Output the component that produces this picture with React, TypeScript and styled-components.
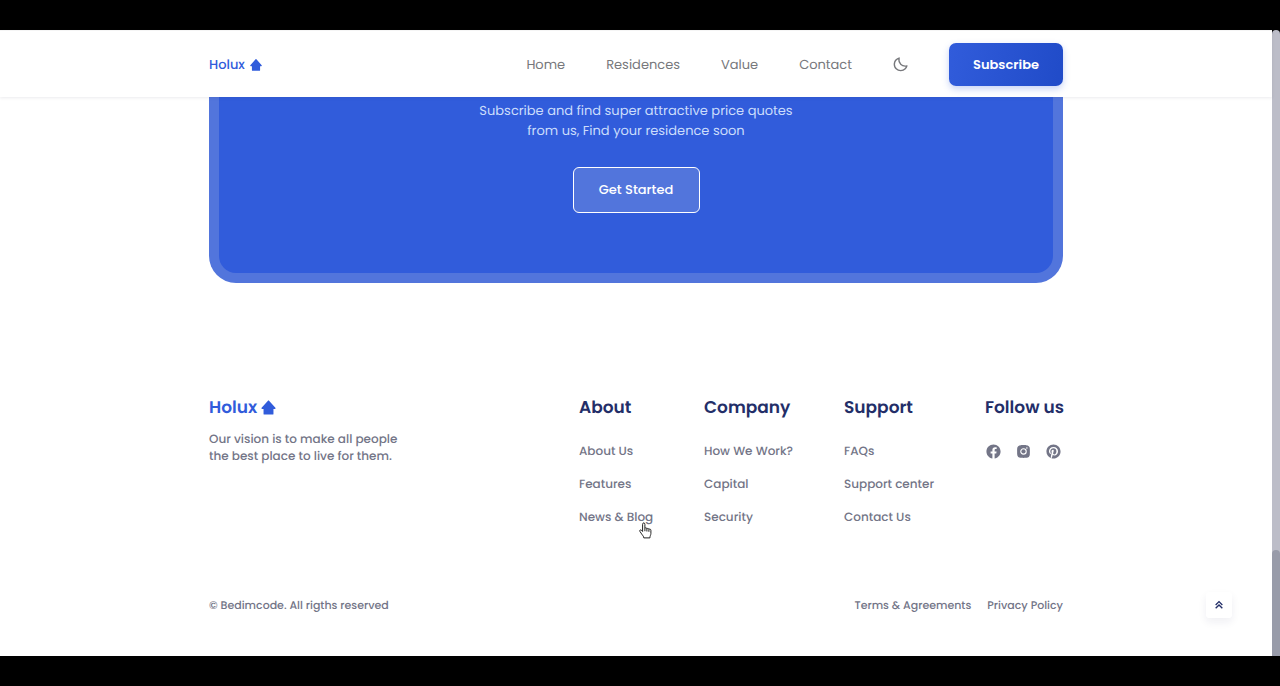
import React from 'react';
import styled, { createGlobalStyle } from 'styled-components';
import {
  BiChevronsUp,
  BiLogoFacebookCircle,
  BiLogoInstagramAlt,
  BiLogoPinterest,
  BiMoon,
  BiSolidHomeAlt2,
} from 'react-icons/bi';

const color = {
  first: '#315cdb',
  firstLight: '#5275dc',
  title: '#232e68',
  text: '#737587',
  nav: '#77787c',
};

const GlobalStyle = createGlobalStyle`
  *, *::before, *::after { box-sizing: border-box; }
  body, h2, p, ul { margin: 0; padding: 0; }
  ul { list-style: none; }
  body {
    background: #000;
    color: ${color.text};
    font-family: Poppins, Inter, "Open Sans", sans-serif;
    font-size: 12px;
    text-rendering: geometricPrecision;
  }
  a { color: inherit; text-decoration: none; }
  button { font: inherit; cursor: pointer; }
`;

const Frame = styled.div`
  display: flex;
  min-height: 100vh;
  padding: 30px 0;
`;

const Page = styled.div`
  position: relative;
  flex: 1;
  display: flex;
  flex-direction: column;
  min-width: 0;
  background: #fff;
`;

const Scrollbar = styled.div`
  display: flex;
  flex-direction: column;
  justify-content: flex-end;
  width: 8px;
  border-radius: 4px 4px 0 0;
  background: #bcbdc8;
`;

const Thumb = styled.div`
  height: 17%;
  border-radius: 4px 4px 0 0;
  background: #989ba9;
`;

const Container = styled.div`
  width: calc(100% - 48px);
  max-width: 854px;
  margin: 0 auto;
`;

const Header = styled.header`
  position: relative;
  background: #fff;
  border-top: 1px solid #f5f5f5;
  box-shadow: 0 1px 3px rgba(60, 60, 90, 0.1);
`;

const Bar = styled(Container)`
  display: flex;
  align-items: center;
  justify-content: space-between;
  height: 66px;
  padding-top: 1px;
`;

const Logo = styled.a<{ $large?: boolean }>`
  display: inline-flex;
  align-items: center;
  gap: ${(p) => (p.$large ? 3 : 4)}px;
  color: ${color.first};
  font-size: ${(p) => (p.$large ? 17 : 13)}px;
  font-weight: ${(p) => (p.$large ? 600 : 500)};
  line-height: ${(p) => (p.$large ? 24 : 20)}px;

  svg {
    width: ${(p) => (p.$large ? 17 : 14)}px;
    height: ${(p) => (p.$large ? 17 : 14)}px;
  }
`;

const Nav = styled.nav`
  display: flex;
  align-items: center;
  gap: 40px;
  color: ${color.nav};
  font-size: 13px;
  line-height: 20px;
`;

const NavList = styled.ul`
  display: flex;
  gap: 41px;
`;

const IconButton = styled.button`
  display: flex;
  padding: 0;
  border: 0;
  background: none;
  color: inherit;

  svg {
    width: 17px;
    height: 17px;
  }
`;

const SubscribeButton = styled.button`
  width: 114px;
  height: 43px;
  border: 0;
  border-radius: 7px;
  background: linear-gradient(101deg, #315cdb, #204bc8);
  box-shadow: 0 3px 7px rgba(49, 92, 219, 0.28);
  color: #fff;
  font-size: 13px;
  font-weight: 600;
`;

const Card = styled.section`
  display: flex;
  flex-direction: column;
  align-items: center;
  padding: 4px 24px 60px;
  border: solid ${color.firstLight};
  border-width: 0 10px 10px;
  border-radius: 0 0 27px 27px;
  background: ${color.first};
  text-align: center;
`;

const CardText = styled.p`
  max-width: 340px;
  color: #cbdcfb;
  font-size: 13px;
  line-height: 20px;
`;

const StartButton = styled.button`
  width: 127px;
  height: 46px;
  margin-top: 26px;
  border: 1px solid #fff;
  border-radius: 6px;
  background: ${color.firstLight};
  color: #fff;
  font-size: 13px;
  font-weight: 500;
`;

const Footer = styled.footer`
  padding: 112px 0 41px;
`;

const FooterTop = styled(Container)`
  display: flex;
  justify-content: space-between;
`;

const Brand = styled.div`
  p {
    margin-top: 12px;
    font-weight: 500;
    line-height: 17px;
    white-space: nowrap;
  }
`;

const Columns = styled.div`
  display: grid;
  grid-template-columns: 72px 87px 88px 78px;
  gap: 53px;
  white-space: nowrap;
`;

const ColumnTitle = styled.h2`
  color: ${color.title};
  font-size: 17px;
  font-weight: 600;
  line-height: 24px;
`;

const LinkList = styled.ul`
  display: grid;
  gap: 13px;
  margin-top: 23px;
  font-weight: 500;
  line-height: 20px;
`;

const FooterLink = styled.a`
  position: relative;
  display: inline-block;
`;

const Socials = styled.ul`
  display: flex;
  gap: 13px;
  margin-top: 24px;

  a { display: flex; }
  svg { width: 17px; height: 17px; }
`;

const Legal = styled(Container)`
  display: flex;
  justify-content: space-between;
  margin-top: 68px;
  font-size: 11px;
  font-weight: 500;
  line-height: 18px;
`;

const LegalLinks = styled.div`
  display: flex;
  gap: 16px;
`;

const ScrollUp = styled.a`
  position: absolute;
  right: 40px;
  bottom: 38px;
  display: flex;
  align-items: center;
  justify-content: center;
  width: 26px;
  height: 26px;
  border-radius: 3px;
  background: #fff;
  box-shadow: 0 4px 9px rgba(30, 35, 80, 0.07);
  color: ${color.title};

  svg { width: 16px; height: 16px; }
`;

const Pointer = styled.svg`
  position: absolute;
  right: 1px;
  top: 14px;
  width: 13px;
  height: 17px;
`;

const HandPointer = () => (
  <Pointer viewBox="0 0 13 17" aria-hidden="true">
    <path
      d="M3.6 9.5V2.3c0-1.9 2.3-1.9 2.3 0v4.1c.3-1 2-.8 2 .5.4-1 2-.6 2 .6.4-.8 2-.5 2 .8v3.2c0 1.5-1 2.4-1 4.4H4.8c0-1.6-1.4-2.6-2.2-4L.9 9.4c-.7-1.2.7-2 1.5-1.2z"
      fill="#fff"
      stroke="#222"
      strokeWidth="1"
      strokeLinejoin="round"
    />
    <path d="M5.9 6.5v2.7M7.9 7v2.5M9.9 7.5v2.3" stroke="#222" fill="none" />
  </Pointer>
);

const navItems = ['Home', 'Residences', 'Value', 'Contact'];

const columns = [
  { title: 'About', links: ['About Us', 'Features', 'News & Blog'] },
  { title: 'Company', links: ['How We Work?', 'Capital', 'Security'] },
  { title: 'Support', links: ['FAQs', 'Support center', 'Contact Us'] },
];

const socials = [
  { name: 'Facebook', Icon: BiLogoFacebookCircle },
  { name: 'Instagram', Icon: BiLogoInstagramAlt },
  { name: 'Pinterest', Icon: BiLogoPinterest },
];

export default function App() {
  return (
    <>
      <GlobalStyle />
      <Frame>
        <Page>
          <Header>
            <Bar>
              <Logo href="#home">
                Holux <BiSolidHomeAlt2 />
              </Logo>
              <Nav>
                <NavList>
                  {navItems.map((item) => (
                    <li key={item}>
                      <a href={`#${item.toLowerCase()}`}>{item}</a>
                    </li>
                  ))}
                </NavList>
                <IconButton aria-label="Toggle dark theme">
                  <BiMoon />
                </IconButton>
                <SubscribeButton>Subscribe</SubscribeButton>
              </Nav>
            </Bar>
          </Header>

          <main>
            <Container>
              <Card>
                <CardText>
                  Subscribe and find super attractive price quotes
                  <br />
                  from us, Find your residence soon
                </CardText>
                <StartButton>Get Started</StartButton>
              </Card>
            </Container>
          </main>

          <Footer>
            <FooterTop>
              <Brand>
                <Logo href="#home" $large>
                  Holux <BiSolidHomeAlt2 />
                </Logo>
                <p>
                  Our vision is to make all people
                  <br />
                  the best place to live for them.
                </p>
              </Brand>
              <Columns>
                {columns.map(({ title, links }) => (
                  <div key={title}>
                    <ColumnTitle>{title}</ColumnTitle>
                    <LinkList>
                      {links.map((link) => (
                        <li key={link}>
                          <FooterLink href="#footer">
                            {link}
                            {link === 'News & Blog' && <HandPointer />}
                          </FooterLink>
                        </li>
                      ))}
                    </LinkList>
                  </div>
                ))}
                <div>
                  <ColumnTitle>Follow us</ColumnTitle>
                  <Socials>
                    {socials.map(({ name, Icon }) => (
                      <li key={name}>
                        <a href="#footer" aria-label={name}>
                          <Icon />
                        </a>
                      </li>
                    ))}
                  </Socials>
                </div>
              </Columns>
            </FooterTop>
            <Legal>
              <span>© Bedimcode. All rigths reserved</span>
              <LegalLinks>
                <a href="#terms">Terms &amp; Agreements</a>
                <a href="#privacy">Privacy Policy</a>
              </LegalLinks>
            </Legal>
          </Footer>

          <ScrollUp href="#home" aria-label="Back to top">
            <BiChevronsUp />
          </ScrollUp>
        </Page>
        <Scrollbar>
          <Thumb />
        </Scrollbar>
      </Frame>
    </>
  );
}
